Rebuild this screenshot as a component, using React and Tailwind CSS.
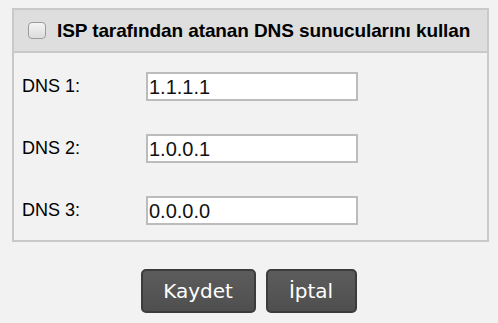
export default function App() {
  const rows = [
    { label: 'DNS 1:', value: '1.1.1.1' },
    { label: 'DNS 2:', value: '1.0.0.1' },
    { label: 'DNS 3:', value: '0.0.0.0' },
  ];

  return (
    <div className="min-h-screen w-[498px] bg-[#f2f2f2] pt-2 pl-3 pr-[9px] font-['Liberation_Sans',Arial,sans-serif]">
      {/* DNS panel */}
      <div className="border-2 border-[#c9c9c9]">
        <div className="h-[43px] bg-[#dedede] border-b-2 border-[#c9c9c9] flex items-center pl-[14px]">
          <span className="w-[18px] h-[17px] rounded-[4px] border border-[#9a9a9a] bg-gradient-to-b from-[#f4f4f4] to-[#dcdcdc] shadow-[inset_0_0_1px_#fff]" />
          <span className="ml-[11px] text-[19px] font-bold text-black leading-none tracking-[-0.1px]">
            ISP tarafından atanan DNS sunucularını kullan
          </span>
        </div>
        <div className="pt-[19px] pb-[15px] flex flex-col gap-[33px]">
          {rows.map((r) => (
            <div key={r.label} className="flex items-center h-[29px]">
              <span className="w-[132px] pl-[8px] text-[18px] text-black">{r.label}</span>
              <div className="w-[212px] h-[29px] bg-white border-2 border-[#bcbcbc] flex items-center pl-[1px] text-[20px] text-[#111]">
                {r.value}
              </div>
            </div>
          ))}
        </div>
      </div>

      {/* Buttons */}
      <div className="flex justify-center gap-[10px] mt-[27px] pr-[4px]">
        <button className="w-[115px] h-[44px] rounded-[5px] border-2 border-[#3c3c3c] bg-gradient-to-b from-[#5c5c5c] to-[#4f4f4f] text-white text-[20px] font-['DejaVu_Sans',Verdana,sans-serif]">
          Kaydet
        </button>
        <button className="w-[91px] h-[44px] rounded-[5px] border-2 border-[#3c3c3c] bg-gradient-to-b from-[#5c5c5c] to-[#4f4f4f] text-white text-[20px] font-['DejaVu_Sans',Verdana,sans-serif]">
          İptal
        </button>
      </div>
    </div>
  );
}
